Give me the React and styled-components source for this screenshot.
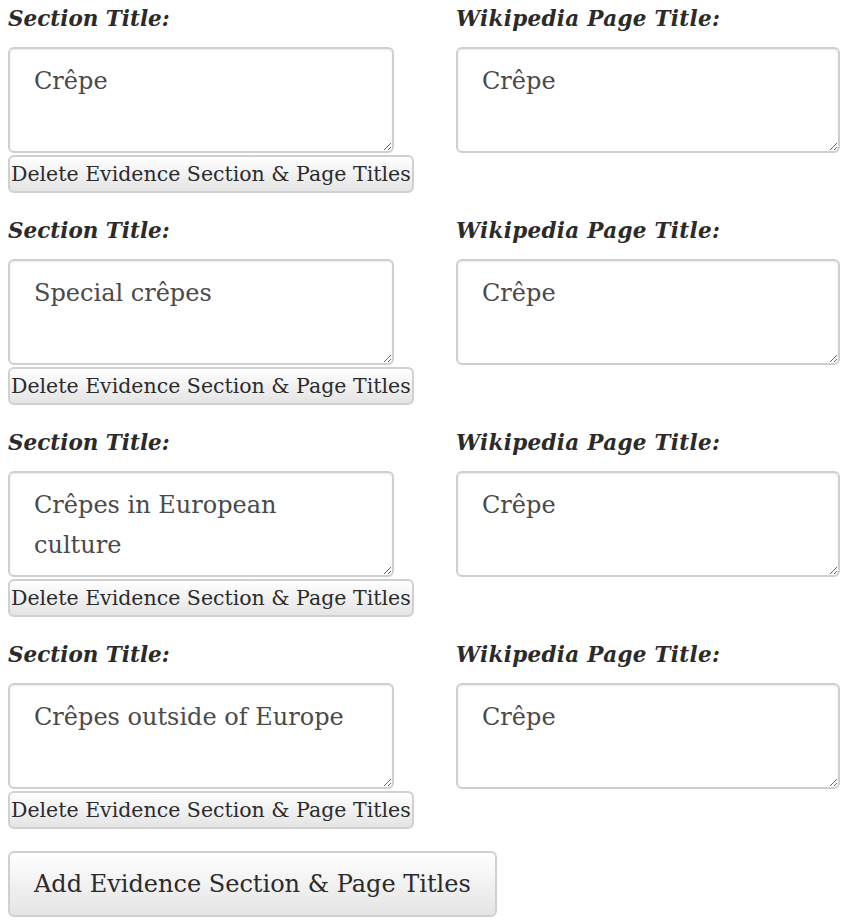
import React from "react";
import styled, { createGlobalStyle } from "styled-components";

const Global = createGlobalStyle`
  html, body { margin: 0; padding: 0; background: #fff; }
  body { font-family: "DejaVu Serif", "Liberation Serif", serif; color: #333; }
`;

const Page = styled.div`
  padding: 0 8px;
`;

const Row = styled.div`
  display: grid;
  grid-template-columns: 448px 384px;
  margin-bottom: 19px;
`;

const Cell = styled.div`
  display: flex;
  flex-direction: column;
  align-items: flex-start;
`;

const Label = styled.label`
  font-family: "DejaVu Serif", serif;
  font-weight: bold;
  font-style: italic;
  font-size: 21.5px;
  letter-spacing: ${(p) => (p.$wide ? "0.3px" : "0")};
  line-height: 38px;
  height: 38px;
  margin-bottom: 9px;
  color: #2b2b2b;
  white-space: nowrap;
`;

const Area = styled.textarea`
  box-sizing: border-box;
  width: ${(p) => p.$w}px;
  height: 106px;
  margin: 0;
  padding: 12px 30px 8px 24px;
  border: 2px solid #cfcfcf;
  border-radius: 6px;
  box-shadow: inset 0 1px 2px rgba(0, 0, 0, 0.08);
  font-family: "DejaVu Serif", serif;
  font-size: 24px;
  line-height: 40px;
  color: #4a4a4a;
  resize: both;
  outline: none;
  overflow: hidden;
`;

const Button = styled.button`
  box-sizing: border-box;
  margin: ${(p) => (p.$big ? "3px 0 0" : "2px 0 0")};
  height: ${(p) => (p.$big ? 66 : 38)}px;
  padding: ${(p) => (p.$big ? "0 24px" : "0 1px")};
  border: 2px solid #d0d0d0;
  border-radius: 6px;
  background: linear-gradient(#ffffff, #e4e4e4);
  font-family: "DejaVu Serif", serif;
  font-size: ${(p) => (p.$big ? 24 : 20.5)}px;
  color: #2b2b2b;
  white-space: nowrap;
  cursor: pointer;
`;

const rows = [
  "Crêpe",
  "Special crêpes",
  "Crêpes in European culture",
  "Crêpes outside of Europe",
];

export default function App() {
  return (
    <Page>
      <Global />
      {rows.map((s, i) => (
        <Row key={i}>
          <Cell>
            <Label>Section Title:</Label>
            <Area $w={386} defaultValue={s} />
            <Button>Delete Evidence Section &amp; Page Titles</Button>
          </Cell>
          <Cell>
            <Label $wide>Wikipedia Page Title:</Label>
            <Area $w={384} defaultValue="Crêpe" />
          </Cell>
        </Row>
      ))}
      <Button $big>Add Evidence Section &amp; Page Titles</Button>
    </Page>
  );
}
